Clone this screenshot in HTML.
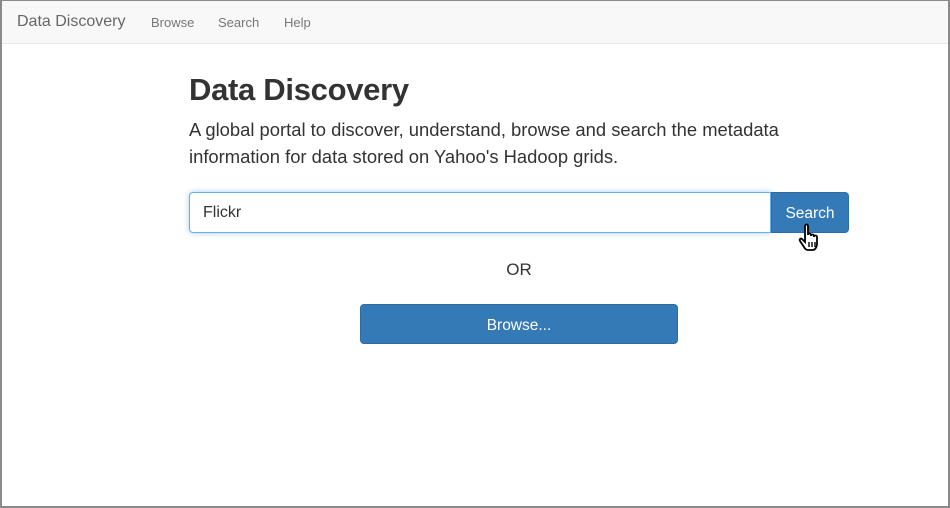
<!DOCTYPE html>
<html><head><style>
body{margin:0;width:950px;height:508px;overflow:hidden;font-family:"Liberation Sans",Arial,sans-serif;background:#fff;}
.frame{position:absolute;left:0;top:0;width:946px;height:505px;border:2px solid #8a8a8a;border-top-width:1px;z-index:5;pointer-events:none}
.nav{position:absolute;left:0;top:0;width:950px;height:43px;background:#f8f8f8;border-bottom:1px solid #e7e7e7;}
.nav span{position:absolute;top:15px;color:#777;font-size:13px;}
.brand{font-size:16px!important;top:13px!important;color:#666!important}
h1{position:absolute;left:189px;top:72px;margin:0;font-size:31px;font-weight:bold;color:#333;letter-spacing:-0.3px}
p{position:absolute;left:189px;top:116px;margin:0;font-size:18.4px;line-height:27px;color:#333;width:640px}
.inp{position:absolute;left:189px;top:192px;width:580px;height:39px;border:1px solid #66afe9;border-radius:4px 0 0 4px;box-shadow:0 0 6px rgba(102,175,233,.6);font-size:16px;color:#333;line-height:40px;text-indent:13px;box-sizing:content-box}
.sb{position:absolute;left:771px;top:192px;width:78px;height:41px;background:#337ab7;border:1px solid #2e6da4;border-radius:0 4px 4px 0;box-sizing:border-box;color:#fff;font-size:15.5px;text-align:center;line-height:41px}
.or{position:absolute;left:0;width:1038px;text-align:center;top:260px;font-size:17px;color:#333}
.bb{position:absolute;left:360px;top:304px;width:318px;height:40px;background:#337ab7;border:1px solid #2e6da4;border-radius:4px;box-sizing:border-box;color:#fff;font-size:15.5px;text-align:center;line-height:41px}
</style></head><body>
<div class="frame"></div>
<div class="nav">
<span class="brand" style="left:17px">Data Discovery</span>
<span style="left:151px">Browse</span>
<span style="left:218px">Search</span>
<span style="left:284px">Help</span>
</div>
<h1>Data Discovery</h1>
<p>A global portal to discover, understand, browse and search the metadata information for data stored on Yahoo's Hadoop grids.</p>
<div class="inp">Flickr</div>
<div class="sb">Search</div>
<svg style="position:absolute;left:798px;top:222px" width="28" height="32" viewBox="0 0 28 30"><path d="M7 3c0-2 3-2 3 0v9c0-2 3-2 3 0v1c0-2 3-2 3 0v1c0-2 3-2 3 0v7c0 3-2 6-4 6h-5c-2 0-3-1-4-3l-4-6c-1-2 1-3 2-2l3 3z" fill="#fff" stroke="#000" stroke-width="1.8"/><path d="M11 19v5M14 19v5M17 19v5" stroke="#000" stroke-width="1.4"/></svg>
<div class="or">OR</div>
<div class="bb">Browse...</div>
</body></html>
